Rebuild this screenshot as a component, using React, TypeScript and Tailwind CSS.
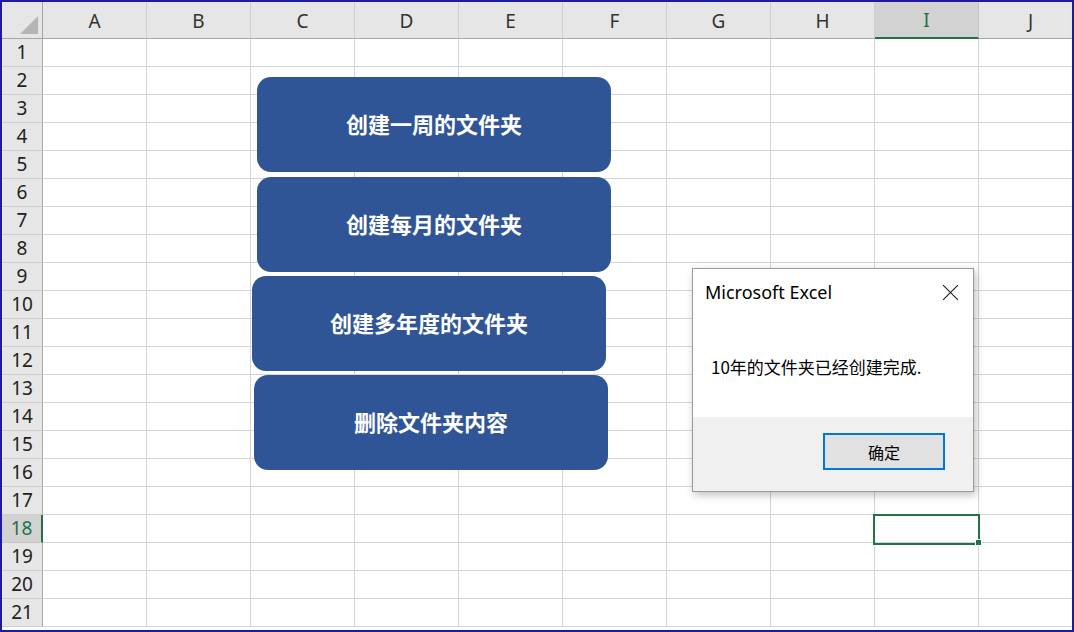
import React from 'react'

const COLS = ['A', 'B', 'C', 'D', 'E', 'F', 'G', 'H', 'I', 'J']
const ROWS = Array.from({ length: 21 }, (_, i) => i + 1)

const SEL_COL = 'I'
const SEL_ROW = 18

const BUTTONS = [
  { label: '创建一周的文件夹', pos: 'left-[255px] top-[75px]' },
  { label: '创建每月的文件夹', pos: 'left-[255px] top-[175px]' },
  { label: '创建多年度的文件夹', pos: 'left-[250px] top-[274px]' },
  { label: '删除文件夹内容', pos: 'left-[252px] top-[373px]' },
]

const cjk = "font-['Microsoft_YaHei','Noto_Sans_CJK_SC',sans-serif]"

function Corner() {
  return (
    <div className="bg-[#e6e6e6] border-r border-b border-[#a6a6a6] relative">
      <svg viewBox="0 0 20 20" className="absolute right-[3px] bottom-[3px] w-[19px] h-[19px]">
        <polygon points="19,0 19,19 0,19" fill="#b5b5b5" />
      </svg>
    </div>
  )
}

function ColHeader({ name }: { name: string }) {
  const sel = name === SEL_COL
  return (
    <div
      className={`flex items-center justify-center pt-[2px] text-[19px] font-['Noto_Sans',sans-serif] border-r ${
        sel
          ? 'bg-[#d2d2d2] text-[#217346] border-b-2 border-b-[#217346] border-r-[#c6c6c6]'
          : 'bg-[#e6e6e6] text-[#333] border-b border-b-[#a6a6a6] border-r-[#cfcfcf]'
      }`}
    >
      {name}
    </div>
  )
}

function RowHeader({ n }: { n: number }) {
  const sel = n === SEL_ROW
  return (
    <div
      className={`flex items-center justify-center text-[19px] font-['Noto_Sans',sans-serif] border-b ${
        sel
          ? 'bg-[#d2d2d2] text-[#217346] border-r-2 border-r-[#217346] border-b-[#c6c6c6]'
          : 'bg-[#e6e6e6] text-[#222] border-r border-r-[#a6a6a6] border-b-[#cfcfcf]'
      }`}
    >
      {n}
    </div>
  )
}

function MessageBox() {
  return (
    <div className="absolute left-[690px] top-[266px] w-[282px] h-[224px] bg-white border border-[#9a9a9a] shadow-[2px_3px_8px_rgba(0,0,0,0.25)] flex flex-col">
      <div className="h-[148px] flex flex-col">
        <div className="flex items-center justify-between h-[46px] pl-[12px] pr-[14px]">
          <span className="text-[18px] text-black font-['Noto_Sans',sans-serif]">Microsoft Excel</span>
          <svg viewBox="0 0 16 16" className="w-[17px] h-[17px]" fill="none" stroke="#222" strokeWidth="1.1">
            <path d="M1 1 L15 15 M15 1 L1 15" />
          </svg>
        </div>
        <div className={`pl-[18px] pt-[39px] text-[17px] text-black ${cjk}`}>10年的文件夹已经创建完成.</div>
      </div>
      <div className="flex-1 bg-[#f0f0f0] flex justify-end items-start pt-[16px] pr-[28px]">
        <div
          className={`w-[122px] h-[37px] border-2 border-[#0078d7] bg-[#e1e1e1] flex items-center justify-center text-[16px] text-black ${cjk}`}
        >
          确定
        </div>
      </div>
    </div>
  )
}

export default function App() {
  return (
    <div className="w-[1074px] h-[632px] border-2 border-[#1c1ca0] bg-white overflow-hidden relative">
      <div className="grid grid-cols-[41px_repeat(10,104px)] grid-rows-[37px_repeat(21,28px)]">
        <Corner />
        {COLS.map((c) => (
          <ColHeader key={c} name={c} />
        ))}
        {ROWS.map((r) => (
          <React.Fragment key={r}>
            <RowHeader n={r} />
            {COLS.map((c) => (
              <div key={c} className="border-r border-b border-[#d4d4d4] bg-white" />
            ))}
          </React.Fragment>
        ))}
      </div>

      {/* active cell I18 */}
      <div className="absolute left-[871px] top-[512px] w-[107px] h-[31px] border-2 border-[#217346]" />
      <div className="absolute left-[973px] top-[537px] w-[7px] h-[7px] bg-[#217346] border border-white" />

      {BUTTONS.map((b) => (
        <div
          key={b.label}
          className={`absolute ${b.pos} w-[354px] h-[95px] rounded-[14px] bg-[#2f5597] flex items-center justify-center pb-[2px] text-white text-[22px] font-bold ${cjk}`}
        >
          {b.label}
        </div>
      ))}

      <MessageBox />
    </div>
  )
}
